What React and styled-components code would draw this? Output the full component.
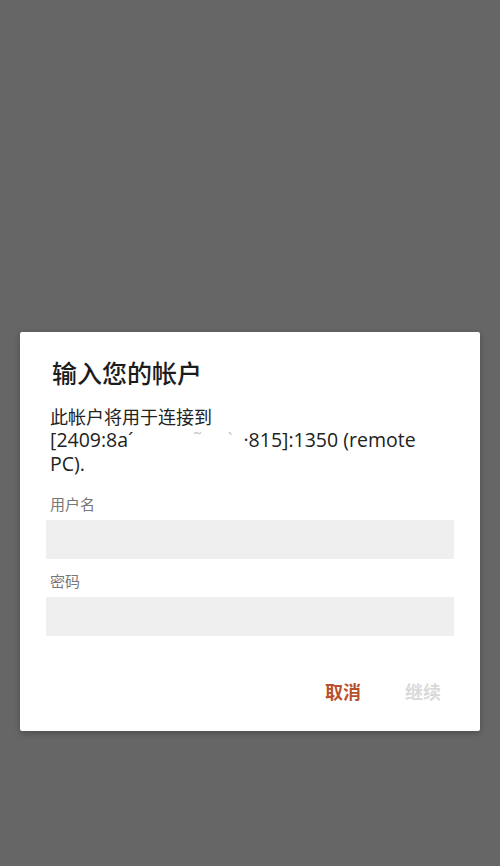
import React from 'react'
import styled, { createGlobalStyle } from 'styled-components'

const GlobalStyle = createGlobalStyle`
  html, body {
    margin: 0;
    padding: 0;
    background: #666666;
  }
  body {
    font-family: "Open Sans", "Noto Sans CJK SC", sans-serif;
  }
`

const Screen = styled.div`
  width: 500px;
  height: 866px;
  background: #666666;
  padding-top: 332px;
  box-sizing: border-box;
  display: flex;
  flex-direction: column;
  align-items: center;
`

const Dialog = styled.div`
  width: 460px;
  background: #ffffff;
  border-radius: 2px;
  box-shadow: 0 2px 6px rgba(0, 0, 0, 0.25);
  padding: 24px 23px 16px 26px;
  box-sizing: border-box;
  display: flex;
  flex-direction: column;
`

const Title = styled.h1`
  margin: 0 0 16px 6px;
  font-family: "Noto Sans CJK SC", sans-serif;
  font-size: 25px;
  line-height: 32px;
  font-weight: 500;
  color: #1c1c1c;
`

const Message = styled.div`
  margin: 0 0 18px 4px;
  font-family: "Noto Sans CJK SC", sans-serif;
  font-size: 18px;
  line-height: 24px;
  color: #222222;
`

const Addr = styled.div`
  font-family: "Open Sans", sans-serif;
  font-size: 19.5px;
  line-height: 24px;
`

const Redacted = styled.span`
  display: inline-block;
  width: ${props => props.w}px;
  color: #c8c8c8;
  letter-spacing: 10px;
  text-align: right;
`

const Label = styled.label`
  display: block;
  margin: 0 0 6px 4px;
  font-family: "Noto Sans CJK SC", sans-serif;
  font-size: 15px;
  line-height: 20px;
  color: #777777;
`

const Input = styled.input`
  display: block;
  width: 408px;
  height: 39px;
  margin: 0 0 ${props => props.gap}px 0;
  border: none;
  outline: none;
  background: #efefef;
  box-sizing: border-box;
  padding: 0 8px;
  font-size: 16px;
`

const Actions = styled.div`
  display: flex;
  justify-content: flex-end;
  gap: 12px;
  margin-top: 31px;
`

const ActionButton = styled.button`
  border: none;
  background: transparent;
  padding: 12px 16px;
  font-family: "Noto Sans CJK SC", sans-serif;
  font-size: 18px;
  line-height: 24px;
  font-weight: 700;
  color: ${props => props.disabled ? '#d9d9d9' : '#b9502d'};
  cursor: pointer;
`

export default function App() {
  return (
    <>
      <GlobalStyle />
      <Screen>
        <Dialog>
          <Title>输入您的帐户</Title>
          <Message>
            此帐户将用于连接到
            <Addr>
              [2409:8a´<Redacted w={110}>˜ ˋ</Redacted>·815]:1350 (remote<br />
              PC).
            </Addr>
          </Message>
          <Label>用户名</Label>
          <Input type="text" gap={12} />
          <Label>密码</Label>
          <Input type="password" gap={0} />
          <Actions>
            <ActionButton>取消</ActionButton>
            <ActionButton disabled>继续</ActionButton>
          </Actions>
        </Dialog>
      </Screen>
    </>
  )
}
